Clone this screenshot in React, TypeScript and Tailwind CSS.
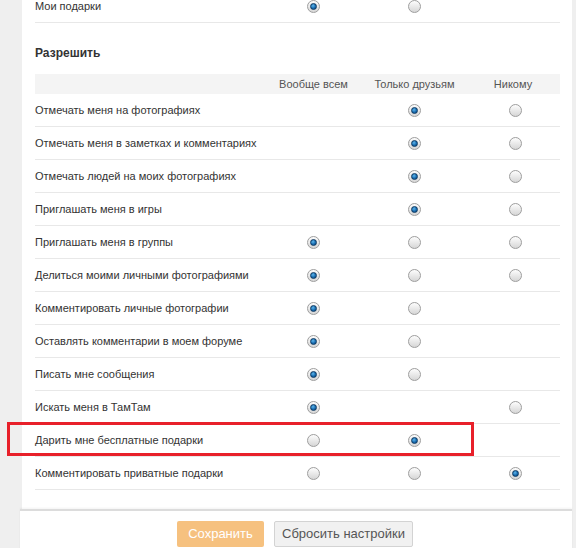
type Row = {
  label: string;
  options: boolean[]; // which columns have a radio
  checked: number;
};

const rows: Row[] = [
  { label: "Отмечать меня на фотографиях", options: [false, true, true], checked: 1 },
  { label: "Отмечать меня в заметках и комментариях", options: [false, true, true], checked: 1 },
  { label: "Отмечать людей на моих фотографиях", options: [false, true, true], checked: 1 },
  { label: "Приглашать меня в игры", options: [false, true, true], checked: 1 },
  { label: "Приглашать меня в группы", options: [true, true, true], checked: 0 },
  { label: "Делиться моими личными фотографиями", options: [true, true, true], checked: 0 },
  { label: "Комментировать личные фотографии", options: [true, true, false], checked: 0 },
  { label: "Оставлять комментарии в моем форуме", options: [true, true, false], checked: 0 },
  { label: "Писать мне сообщения", options: [true, true, false], checked: 0 },
  { label: "Искать меня в ТамТам", options: [true, false, true], checked: 0 },
  { label: "Дарить мне бесплатные подарки", options: [true, true, false], checked: 1 },
  { label: "Комментировать приватные подарки", options: [true, true, true], checked: 2 },
];

function Radio({ on }: { on: boolean }) {
  return (
    <span className="flex h-[13px] w-[13px] items-center justify-center rounded-full border border-[#9e9e9e] bg-gradient-to-b from-[#fdfdfd] to-[#d6d6d6]">
      {on && (
        <span className="h-[7px] w-[7px] rounded-full border border-[#0d3a63] bg-[radial-gradient(circle_at_40%_35%,#5fb6ea_0%,#176bb0_55%,#0c4275_100%)]" />
      )}
    </span>
  );
}

function Cell({ show, on }: { show: boolean; on: boolean }) {
  return <div className="flex items-center justify-center">{show && <Radio on={on} />}</div>;
}

export default function App() {
  const highlight = 10;
  return (
    <div
      className="h-[548px] w-[576px] overflow-hidden bg-[#efefef] text-[11px] text-[#333]"
      style={{ fontFamily: '"Liberation Sans", Arial, sans-serif' }}
    >
      <div className="ml-[22px] w-[550px] bg-white pl-[13px] pr-[12px]">
        {/* tail of the previous table */}
        <div className="-mt-[10px] grid h-[33px] grid-cols-[228px_101px_101px_101px] items-center border-b border-[#e8e8e8]">
          <div>Мои подарки</div>
          <Cell show on />
          <Cell show on={false} />
          <div />
        </div>

        <h2 className="pt-[21px] pb-[12px] text-[12px] font-bold leading-[18px] text-[#333]">
          Разрешить
        </h2>

        <div className="grid h-[20px] grid-cols-[228px_101px_101px_1fr] items-center bg-[#f4f4f4] text-[#555]">
          <div />
          <div className="text-center">Вообще всем</div>
          <div className="text-center">Только друзьям</div>
          <div className="pl-[1px] text-center">Никому</div>
        </div>

        {rows.map((r, i) => (
          <div key={r.label} className="relative">
            <div className="grid h-[33px] grid-cols-[228px_101px_101px_101px] items-center border-b border-[#e8e8e8]">
              <div>{r.label}</div>
              {r.options.map((show, c) => (
                <Cell key={c} show={show} on={r.checked === c} />
              ))}
            </div>
            {i === highlight && (
              <div className="pointer-events-none absolute top-[-2px] left-[-28px] h-[34px] w-[467px] border-[3px] border-[#e8202a]" />
            )}
          </div>
        ))}
        <div className="h-[19px]" />
      </div>

      <div className="ml-[20px] w-[552px] border-t-2 border-[#dcdcdc] bg-white pt-[10px] shadow-[0_-1px_2px_rgba(0,0,0,0.05)]">
        <div className="flex gap-[10px] pl-[157px]">
          <button className="h-[26px] w-[87px] rounded-[2px] bg-[#f6c17f] text-[13px] text-white">
            Сохранить
          </button>
          <button className="h-[26px] w-[139px] rounded-[2px] border border-[#d3d3d3] bg-[#f1f1f1] text-[13px] text-[#555]">
            Сбросить настройки
          </button>
        </div>
        <div className="h-[10px]" />
      </div>
    </div>
  );
}
